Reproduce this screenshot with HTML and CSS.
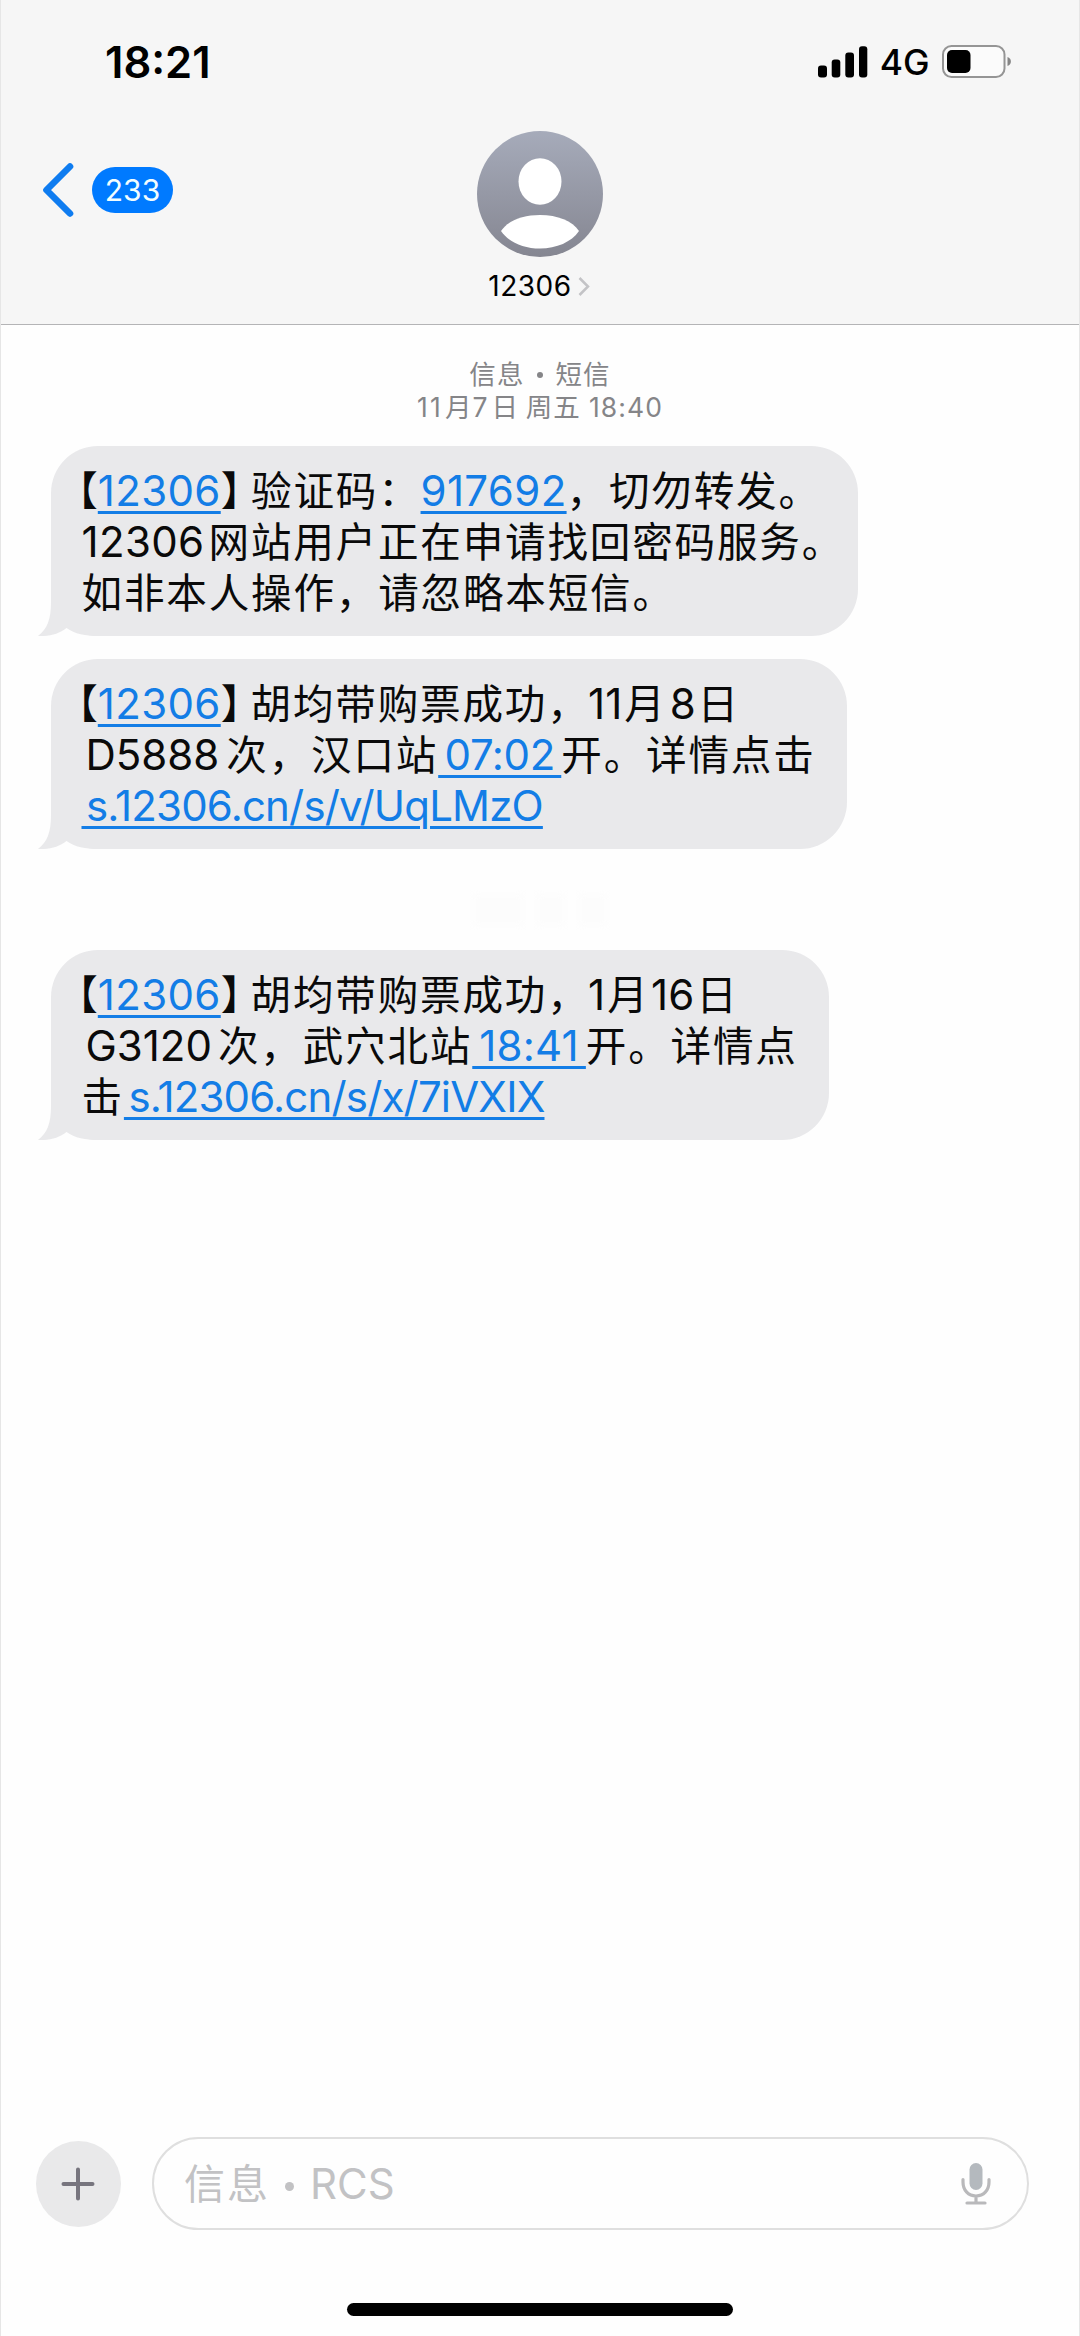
FILE: index.html
```html
<!DOCTYPE html>
<html lang="zh-CN">
<head>
<meta charset="utf-8">
<title>12306</title>
<link rel="stylesheet" href="styles.css">
</head>
<body>
<div class="phone">
  <header class="header">
    <div class="status">
      <span class="clock">18:21</span>
      <div class="indicators">
        <svg class="signal" width="50" height="32" viewBox="0 0 50 32">
          <rect x="0" y="19.500" width="9" height="12" rx="3"/>
          <rect x="13.7" y="13.500" width="8.6" height="18" rx="3"/>
          <rect x="27.3" y="6.500" width="8.7" height="25" rx="3"/>
          <rect x="41" y="0.3" width="8.3" height="31.2" rx="3"/>
        </svg>
        <span class="network">4G</span>
        <svg class="battery" width="70" height="33" viewBox="0 0 70 33">
          <rect x="1" y="1" width="61.5" height="31" rx="8.5" fill="#fbfbfb" stroke="#959595" stroke-width="2"/>
          <rect x="5" y="5" width="23.5" height="23" rx="5"/>
          <path d="M65.5 12 C70 13.5 70 19.500 65.500 21 Z" fill="#858585"/>
        </svg>
      </div>
    </div>
    <nav class="nav">
      <a class="back">
        <svg width="32" height="54" viewBox="0 0 32 54"><path d="M28 3.500 L4.500 27 L28 50.500" fill="none" stroke="#0f7cf0" stroke-width="6.600" stroke-linecap="round" stroke-linejoin="round"/></svg>
        <span class="unread">233</span>
      </a>
      <div class="contact">
        <svg width="126" height="126" viewBox="0 0 126 126">
          <defs><linearGradient id="tone" x1="0" y1="0" x2="0" y2="1"><stop offset="0" stop-color="#a6abba"/><stop offset="1" stop-color="#858691"/></linearGradient></defs>
          <circle cx="63" cy="63" r="63" fill="url(#tone)"/>
          <ellipse cx="63" cy="50.500" rx="21.500" ry="23.300" fill="#fff"/>
          <path d="M24 100 C30.500 90 45.500 84 63 84 S95.500 90 102 100 C94.500 111 79.500 117.500 63 117.500 S31.500 111 24 100 Z" fill="#fff"/>
        </svg>
        <div class="name">12306<svg width="12" height="19" viewBox="0 0 12 19"><path d="M1.500 1 L10 9.500 L1.500 18" fill="none" stroke="#c3c3c6" stroke-width="2.500"/></svg></div>
      </div>
    </nav>
  </header>

  <main class="thread">
    <div class="stamp">
      <p><span class="zh">信息</span><span class="dot"></span><span class="zh">短信</span></p>
      <p><span class="day">11</span><span class="zh">月</span><span class="num">7</span><span class="zh date">日</span><span class="zh week">周五</span><span>18:40</span></p>
    </div>

    <article class="bubble first">
      <p><span class="open">【</span><a>12306</a><span class="close">】</span><span class="zh">验证码：</span><a class="code">917692</a><span class="zh">，切勿转发。</span></p>
      <p><span class="lead">12306</span><span class="zh">网站用户正在申请找回密码服务。</span></p>
      <p><span class="zh">如非本人操作，请忽略本短信。</span></p>
      <svg class="tail" width="61" height="50" viewBox="0 0 61 50"><path d="M13 0 V16 C13 34 9 43 0 50 C12 50.500 21 48 28.500 42 C37 48 47 50 61 50 V0 Z"/></svg>
    </article>

    <article class="bubble second">
      <p><span class="open">【</span><a>12306</a><span class="close">】</span><span class="zh">胡均带购票成功，</span><span class="month">11</span><span class="zh">月</span><span class="date8">8</span><span class="zh">日</span></p>
      <p><span class="train">D5888</span><span class="zh">次，汉口站</span><a class="time early"> 07:02 </a><span class="zh">开。详情点击</span></p>
      <p><a class="url"> s.12306.cn/s/v/UqLMzO</a></p>
      <svg class="tail" width="61" height="50" viewBox="0 0 61 50"><path d="M13 0 V16 C13 34 9 43 0 50 C12 50.500 21 48 28.500 42 C37 48 47 50 61 50 V0 Z"/></svg>
    </article>

    <div class="gap"><i></i><i></i><i></i></div>

    <article class="bubble third">
      <p><span class="open">【</span><a>12306</a><span class="close">】</span><span class="zh">胡均带购票成功，</span><span class="month">1</span><span class="zh">月</span><span class="date16">16</span><span class="zh">日</span></p>
      <p><span class="train short">G3120</span><span class="zh">次，武穴北站</span><a class="time late"> 18:41 </a><span class="zh">开。详情点</span></p>
      <p><span class="zh">击</span><a class="url"> s.12306.cn/s/x/7iVXIX</a></p>
      <svg class="tail" width="61" height="50" viewBox="0 0 61 50"><path d="M13 0 V16 C13 34 9 43 0 50 C12 50.500 21 48 28.500 42 C37 48 47 50 61 50 V0 Z"/></svg>
    </article>
  </main>

  <footer class="composer">
    <div class="row">
      <div class="add"><svg width="34" height="34" viewBox="0 0 34 34"><path d="M2.500 17 H31.500 M17 2.500 V31.500" stroke="#77757e" stroke-width="4" stroke-linecap="round"/></svg></div>
      <div class="field">
        <span class="hint"><span class="zh">信息</span><span class="dot"></span><span>RCS</span></span>
        <svg width="30" height="44" viewBox="0 0 30 44">
          <rect x="8.500" y="1" width="13" height="27" rx="6.500" fill="#b4b9be"/>
          <path d="M2 17.500 V20 C2 28.500 7.500 34 15 34 S28 28.500 28 20 V17.500 M15 34 V41 M6 41 H24" fill="none" stroke="#b9b9bb" stroke-width="3.200" stroke-linecap="round"/>
        </svg>
      </div>
    </div>
    <div class="home"></div>
  </footer>
</div>
</body>
</html>
```
FILE: styles.css
```css
* { box-sizing: border-box; }
body { margin: 0; background: #fefefe; }
p { margin: 0; }
svg { display: block; }

.phone {
  width: 1080px;
  height: 2336px;
  display: flex;
  flex-direction: column;
  border: solid #e6e6e6;
  border-width: 0 1px;
  font-family: Inter, "Noto Sans CJK SC", sans-serif;
  color: #0a0a0a;
}

/* CJK runs */
.zh, .open, .close { font-family: "Noto Sans CJK SC", sans-serif; line-height: 1; }

/* Header */
.header {
  height: 325px;
  background: #f6f6f6;
  border-bottom: 1px solid #b4b4b6;
}
.status {
  height: 123px;
  padding: 0 67px 0 104px;
  display: flex;
  justify-content: space-between;
  align-items: center;
}
.clock { font-size: 43.500px; font-weight: 600; color: #000; }
.indicators { display: flex; align-items: center; }
.network { margin: 2px 12.500px 0 12px; font-size: 35.500px; font-weight: 500; line-height: 36px; color: #000; }
.nav { display: grid; grid-template-columns: 1fr 160px 1fr; padding: 8px 41px 0; }
.back { display: flex; align-items: center; gap: 18px; height: 117px; }
.unread {
  width: 81px;
  height: 46px;
  border-radius: 23px;
  background: #007aff;
  color: #f2fdff;
  font-size: 30px;
  line-height: 46px;
  text-align: center;
}
.contact { display: flex; flex-direction: column; align-items: center; gap: 9px; }
.name { display: flex; align-items: center; gap: 6px; padding-right: 2px; font-size: 28px; line-height: 40px; letter-spacing: 0.5px; color: #000; }

/* Thread */
.thread { flex: 1; display: flex; flex-direction: column; align-items: flex-start; padding-left: 50px; }
.stamp {
  align-self: stretch;
  height: 121px;
  padding: 32.500px 50px 0 0;
  color: #858588;
  font-size: 26.500px;
  line-height: 33px;
  letter-spacing: 1.100px;
  text-align: center;
}
.stamp .dot { display: inline-block; width: 6px; height: 6px; margin: 0 13px 6px 12px; border-radius: 50%; background: currentColor; }
.stamp .day { letter-spacing: 2.200px; margin-right: 2px; }
.stamp .date { margin: 0 6.500px 0 3px; }
.stamp .week { margin-right: 8px; }

.bubble {
  position: relative;
  isolation: isolate;
  height: 190px;
  padding: 19px 0 0 30.500px;
  border-radius: 47px;
  background: #e9e9eb;
  font-size: 42px;
  line-height: 51px;
}
.bubble p { height: 51px; white-space: pre; }
.bubble .zh { font-size: 40.600px; letter-spacing: 1.800px; }
.first { width: 807px; margin-bottom: 23px; }
.second { width: 796px; }
.third { width: 778px; }
.gap { align-self: stretch; height: 101px; padding: 46px 50px 0 0; display: flex; justify-content: center; gap: 14px; }
.gap i { width: 28px; height: 30px; background: #fcfcfc; filter: blur(3px); }
.gap i:first-child { width: 50px; }

.open, .close { font-size: 40.600px; font-feature-settings: "halt"; }
.open { margin-left: -4px; }
.close { margin-right: 9.500px; }
.bubble a {
  color: #137de6;
  letter-spacing: 0.350px;
  text-decoration: underline;
  text-decoration-thickness: 2.500px;
  text-underline-offset: 5px;
}
.first .close { margin-right: 10px; }
.lead { letter-spacing: 0.350px; margin-right: 4px; }
.month { margin: 0 2px 0 -1.500px; }
.date8 { margin: 0 2px 0 3px; }
.date16 { margin: 0 2px 0 1.500px; }
.train { margin: 0 7px 0 4px; }
.train.short { margin-right: 6px; }
.bubble .time { word-spacing: -5px; }
.bubble .early { letter-spacing: -0.400px; }
.bubble .late { letter-spacing: 0.200px; }
.bubble .url { letter-spacing: -0.820px; word-spacing: -6.500px; }
.tail { position: absolute; left: -13px; bottom: 0; z-index: -1; fill: #e9e9eb; }

/* Composer */
.composer { height: 199px; display: flex; flex-direction: column; align-items: center; justify-content: space-between; padding-bottom: 20px; }
.row { align-self: stretch; display: flex; align-items: center; gap: 31px; padding: 0 50px 0 35px; }
.add { width: 85px; height: 86px; padding-right: 1px; border-radius: 50%; background: #e9e9ea; display: grid; place-items: center; }
.field {
  flex: 1;
  height: 93px;
  display: flex;
  align-items: center;
  justify-content: space-between;
  padding: 0 36px 0 30px;
  border: 2px solid #dfdfdf;
  border-radius: 47px;
}
.hint { color: #c2c2c4; font-size: 42px; line-height: 50px; }
.hint .zh { font-size: 41px; letter-spacing: 2px; }
.hint .dot { display: inline-block; width: 9px; height: 9px; margin: 0 16px 8px 15px; border-radius: 50%; background: currentColor; }
.home { width: 386px; height: 13px; border-radius: 7px; background: #000; }
```
